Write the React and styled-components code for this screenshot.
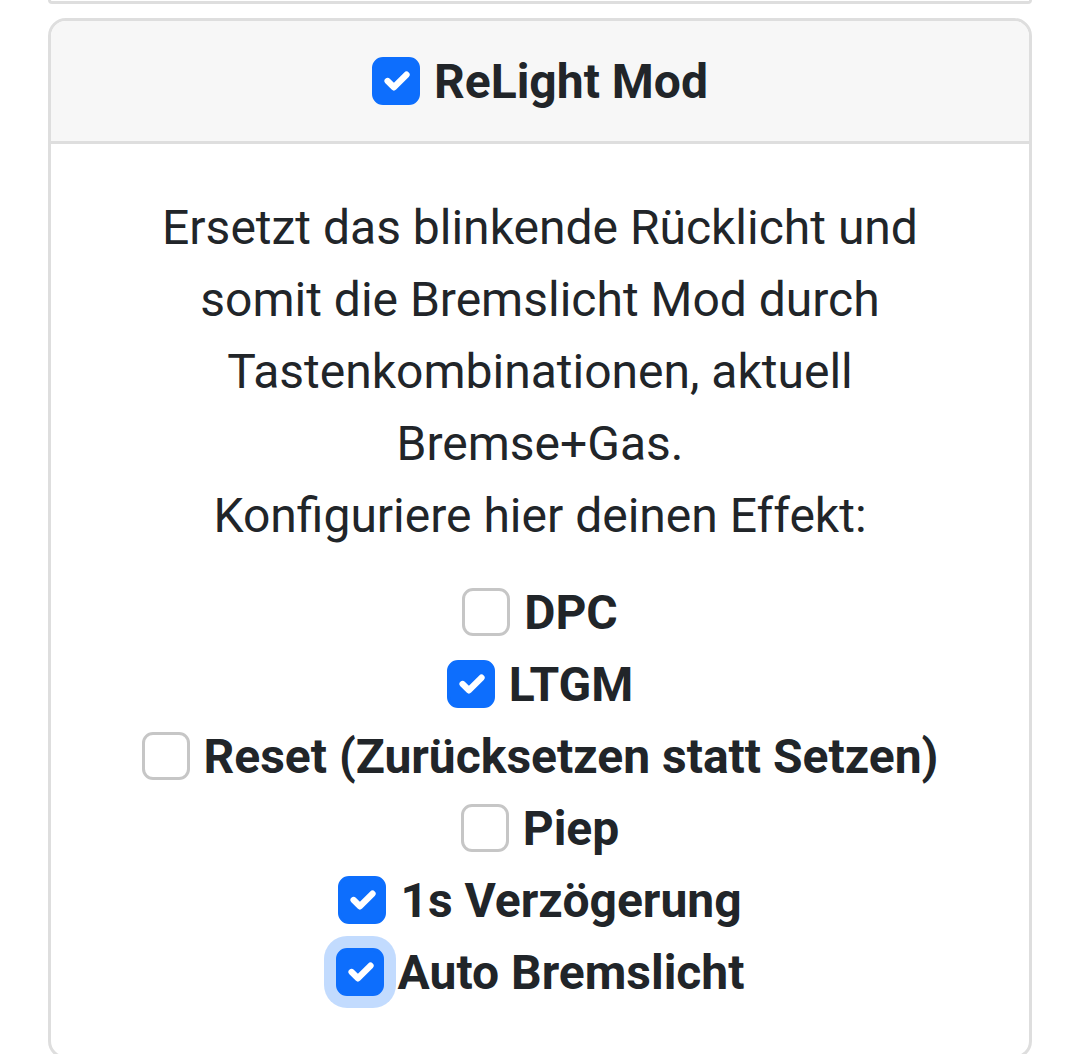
import React, { useState } from "react";
import styled, { createGlobalStyle } from "styled-components";

const GlobalStyle = createGlobalStyle`
  html, body {
    margin: 0;
    padding: 0;
    background: #fff;
  }
  body {
    font-family: Roboto, "Liberation Sans", sans-serif;
    color: #212529;
  }
`;

const Page = styled.div`
  padding: 0 48px;
  display: flex;
  flex-direction: column;
  gap: 14px;
`;

// only the bottom edge of the card above is visible
const PrevCardEnd = styled.div`
  height: 1px;
  border: 3px solid #dedede;
  border-top: none;
  border-radius: 0 0 18px 18px;
`;

const Card = styled.div`
  border: 3px solid #dedede;
  border-radius: 18px;
  overflow: hidden;
  background: #fff;
`;

const CardHeader = styled.div`
  background: #f7f7f7;
  border-bottom: 3px solid #dedede;
  padding: 24px 48px;
  display: flex;
  justify-content: center;
`;

const CardBody = styled.div`
  padding: 48px;
  text-align: center;
`;

const Description = styled.p`
  margin: 0 0 24px;
  font-size: 48px;
  line-height: 72px;
`;

const OptionList = styled.div`
  display: flex;
  flex-direction: column;
  align-items: center;
`;

const CheckRow = styled.label`
  display: flex;
  align-items: center;
  gap: 14px;
  height: 72px;
  font-size: 48px;
  font-weight: 700;
  cursor: pointer;
  user-select: none;
`;

const Box = styled.span`
  flex: none;
  width: 48px;
  height: 48px;
  box-sizing: border-box;
  border-radius: 11px;
  border: 3px solid ${(p) => (p.$checked ? "#0d6efd" : "#c6c6c6")};
  background: ${(p) => (p.$checked ? "#0d6efd" : "#fff")};
  box-shadow: ${(p) =>
    p.$focus ? "0 0 0 12px rgba(13, 110, 253, 0.25)" : "none"};
  display: flex;
  align-items: center;
  justify-content: center;
`;

const CheckMark = () => (
  <svg width="42" height="42" viewBox="0 0 20 20">
    <path
      d="m6 10 3 3 6-6"
      fill="none"
      stroke="#fff"
      strokeWidth="3"
      strokeLinecap="round"
      strokeLinejoin="round"
    />
  </svg>
);

const Check = ({ label, checked, focus, onToggle }) => (
  <CheckRow onClick={onToggle}>
    <Box $checked={checked} $focus={focus}>
      {checked && <CheckMark />}
    </Box>
    <span>{label}</span>
  </CheckRow>
);

const initialOptions = [
  { key: "dpc", label: "DPC", checked: false },
  { key: "ltgm", label: "LTGM", checked: true },
  { key: "reset", label: "Reset (Zurücksetzen statt Setzen)", checked: false },
  { key: "piep", label: "Piep", checked: false },
  { key: "delay", label: "1s Verzögerung", checked: true },
  { key: "auto", label: "Auto Bremslicht", checked: true },
];

const App = () => {
  const [enabled, setEnabled] = useState(true);
  const [options, setOptions] = useState(initialOptions);
  const [focused, setFocused] = useState("auto");

  const toggle = (key) => {
    setFocused(key);
    setOptions((opts) =>
      opts.map((o) => (o.key === key ? { ...o, checked: !o.checked } : o))
    );
  };

  return (
    <>
      <GlobalStyle />
      <Page>
        <PrevCardEnd />
        <Card>
          <CardHeader>
            <Check
              label="ReLight Mod"
              checked={enabled}
              onToggle={() => setEnabled(!enabled)}
            />
          </CardHeader>
          <CardBody>
            <Description>
              Ersetzt das blinkende Rücklicht und
              <br />
              somit die Bremslicht Mod durch
              <br />
              Tastenkombinationen, aktuell
              <br />
              Bremse+Gas.
              <br />
              Konfiguriere hier deinen Effekt:
            </Description>
            <OptionList>
              {options.map((o) => (
                <Check
                  key={o.key}
                  label={o.label}
                  checked={o.checked}
                  focus={focused === o.key}
                  onToggle={() => toggle(o.key)}
                />
              ))}
            </OptionList>
          </CardBody>
        </Card>
      </Page>
    </>
  );
};

export default App;
